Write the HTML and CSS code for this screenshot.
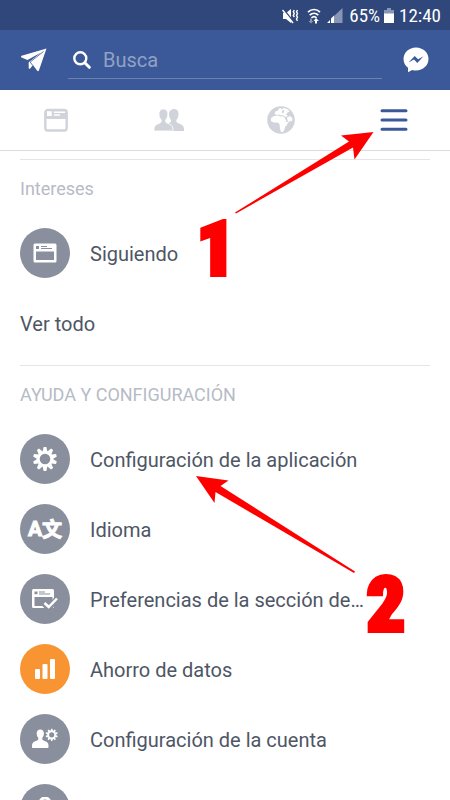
FILE: index.html
```html
<!DOCTYPE html>
<html lang="es">
<head>
<meta charset="utf-8">
<meta name="viewport" content="width=device-width, initial-scale=1">
<title>Menú</title>
<link rel="stylesheet" href="styles.css">
</head>
<body>
<div class="app">
  <div class="status">
    <svg class="status-mute" width="17" height="16" viewBox="0 0 17 16" aria-hidden="true">
      <path d="M1 5h3l5-4v14l-5-4H1z" fill="#fff"/>
      <path d="M1 .5l11 14" stroke="#2f477a" stroke-width="1.500"/>
      <path d="M.5 2l10.500 13" stroke="#fff" stroke-width="1.500"/>
      <path d="M12.300 2l-1 1.800 1 1.800-1 1.800 1 1.800M15.500 2l-1 1.800 1 1.800-1 1.800 1 1.800-1 1.800 1 1.800" fill="none" stroke="#fff" stroke-width="1.400"/>
    </svg>
    <svg class="status-wifi" width="14" height="16" viewBox="0 0 14 16" aria-hidden="true">
      <g fill="none" stroke="#fff" stroke-width="1.700"><path d="M1 4.200C4.500.6 9.500.6 13 4.200"/><path d="M2.700 7.200c2.600-2.600 6-2.600 8.600 0"/><path d="M4.500 9.800c1.500-1.500 3.500-1.500 5 0"/></g>
      <path d="M9 10l3 3h-2v2.500H8V13H6.500z" fill="#fff"/>
      <path d="M3 10.500h2V13h1.500L4 15.500 1.500 13H3z" fill="#8796b6"/>
    </svg>
    <svg class="status-signal" width="16" height="15" viewBox="0 0 16 15" aria-hidden="true">
      <path d="M15.500 0v15H7V8z" fill="#8796b6"/><path d="M7 7.500V15H4v-4.500zM3 12v3H0z" fill="#fff"/>
    </svg>
    <span class="status-pct">65%</span>
    <svg class="status-battery" width="10" height="15" viewBox="0 0 10 15" aria-hidden="true">
      <path d="M3 0h4v2h3v4H0V2h3z" fill="#8796b6"/><path d="M0 5.500h10V15H0z" fill="#fff"/>
    </svg>
    <time>12:40</time>
  </div>

  <header class="header">
    <button class="icon-btn" type="button" aria-label="Enviar">
      <svg width="26" height="24" viewBox="0 0 26 24"><path d="M25.500.5L.6 7.800c-.8.3-.7 1.200-.1 1.700L6.500 12 20 4.500 7.700 14.200v5.600c0 1.300 1 1.300 1.500.6l2.700-3.400 4.300 5.700c.7.700 1.400.5 1.700-.3z" fill="#fff"/><path d="M22.500 3.500L9.200 14l2.500 3.400" fill="none" stroke="#3b5998" stroke-width=".8"/></svg>
    </button>
    <label class="search">
      <svg width="18" height="18" viewBox="0 0 18 18" aria-hidden="true"><circle cx="7.300" cy="7.300" r="6" fill="none" stroke="#fff" stroke-width="2.400"/><path d="M11.800 11.800l4.500 4.500" stroke="#fff" stroke-width="3" stroke-linecap="round"/></svg>
      <input type="search" placeholder="Busca" aria-label="Busca">
    </label>
    <button class="icon-btn" type="button" aria-label="Messenger">
      <svg width="26" height="26" viewBox="0 0 26 26"><path d="M13 .5C6 .5.500 5.500.500 12c0 3.600 1.700 6.600 4.500 8.700v4.500l4.200-2.300c1.200.4 2.500.5 3.800.5 7 0 12.500-5 12.500-11.400S20 .5 13 .5z" fill="#fff"/><path d="M5.500 15.600L11.700 9l3.400 3.300L20.500 9.300l-6.200 6.600-3.300-3.400z" fill="#3b5998"/></svg>
    </button>
  </header>

  <nav class="tabs">
    <button type="button" aria-label="Noticias">
      <svg width="24" height="24" viewBox="0 0 24 24"><rect x="1.300" y="2" width="21.400" height="20.500" rx="2.500" fill="none" stroke="#d1d3da" stroke-width="2.400"/><path d="M1 2h22v9H1z" fill="#d1d3da"/><path d="M3 3.200h4.800V8H3zM9.800 3.500H21V5H9.800zM9.800 6.300H16v1.400H9.800z" fill="#fff"/></svg>
    </button>
    <button type="button" aria-label="Amigos">
      <svg width="30" height="24" viewBox="0 0 30 24"><g fill="#d1d3da"><path d="M20.200 1c3 0 4.600 2.300 4.300 5.700-.2 2.500-1.200 4.300-2.200 5.300 0 2 .3 2.500 2.200 3.300 3.300 1.300 5.500 2.500 5.500 6.200V23H18c1-3-.5-6-3.500-7.600 2-.7 2.600-1.400 2.500-3.400-1-1-1.800-3-2-5.300C14.800 3.300 17 1 20.200 1z"/><path d="M9.300 1c3 0 4.800 2.300 4.500 5.700-.2 2.600-1.200 4.300-2.300 5.300 0 2.200.4 2.600 2.200 3.300 3.300 1.200 5.300 2.500 5.300 6.200V23H0v-1.500C0 17.800 2 16.500 5.200 15.300 7 14.600 7.300 14.200 7.300 12 6.200 11 5.200 9.200 5 6.700 4.700 3.300 6.300 1 9.300 1z" stroke="#fff" stroke-width=".8"/></g></svg>
    </button>
    <button type="button" aria-label="Notificaciones">
      <svg width="28" height="28" viewBox="0 0 28 28"><circle cx="14" cy="14" r="13.800" fill="#d1d3da"/><path d="M4 12l3-2 4.500-.5 1.500 1 3.500-.3 1.500 2 1.500 3.800h2l-2 3.500-1.500 1.500-.5 2.500-1.500 2.500h-2l-1-3.500-.5-4.500-2-1.500H6.500L4 15zM7.500 8l1-2.500 2.500-1 1-2 2-.5v1.500l3-1.500 4 1.500 1.500 2-2 1-1.500 2 2 1.500-2.500 1-2-1.500-1.500-.5-1 .5-2-1-2 .5zM20 11.500l3-1.500 2.500 2.500-.5 3-1.500-1-1.500 2-1.500-2z" fill="#fff"/><path d="M15 4.500l2.500-.5-1 3-1.500.3z" fill="#d1d3da"/></svg>
    </button>
    <button type="button" aria-label="Menú" aria-current="page">
      <svg width="28" height="24" viewBox="0 0 28 24"><path d="M2 2.700h24M2 12h24M2 21.300h24" stroke="#3b5998" stroke-width="3" stroke-linecap="round"/></svg>
    </button>
  </nav>

  <main class="content">
    <section class="section">
      <h2>Intereses</h2>
      <button class="row" type="button">
        <span class="disc"><svg width="24" height="22" viewBox="0 0 24 22"><rect x=".5" y="1.500" width="23" height="19" rx="1.500" fill="#fff"/><path d="M3 4h3v3H3zM8 4h6v1H8zM8 6h11v1H8zM3 9.500h18V18H3z" fill="#898f9c"/></svg></span>
        <span class="label">Siguiendo</span>
      </button>
      <a class="row" href="#todo"><span class="label">Ver todo</span></a>
    </section>
    <section class="section">
      <h2>AYUDA Y CONFIGURACIÓN</h2>
      <button class="row" type="button">
        <span class="disc"><svg width="24" height="24" viewBox="-12 -12 24 24"><circle r="6.800" fill="none" stroke="#fff" stroke-width="3"/><g id="teeth" fill="#fff"><path id="tooth" d="M-2.400-7.500L-1.300-12h2.600l1.100 4.500z"/><use href="#tooth" transform="rotate(36)"/><use href="#tooth" transform="rotate(72)"/><use href="#tooth" transform="rotate(108)"/><use href="#tooth" transform="rotate(144)"/><use href="#tooth" transform="rotate(180)"/><use href="#tooth" transform="rotate(216)"/><use href="#tooth" transform="rotate(252)"/><use href="#tooth" transform="rotate(288)"/><use href="#tooth" transform="rotate(324)"/></g></svg></span>
        <span class="label">Configuración de la aplicación</span>
      </button>
      <button class="row" type="button">
        <span class="disc lang" aria-hidden="true"><span class="lang-a">A</span><span class="lang-w">文</span></span>
        <span class="label">Idioma</span>
      </button>
      <button class="row" type="button">
        <span class="disc"><svg width="26" height="22" viewBox="0 0 26 22"><rect x="0" y="1" width="22" height="19" rx="1.500" fill="#fff"/><path d="M2.500 3.500h3v2.700h-3zM7 3.500h6v1H7zM7 5.500h11v1H7zM2.500 9h18v9h-18z" fill="#898f9c"/><path d="M12 15.500l4.500 4.500L26 10" fill="none" stroke="#898f9c" stroke-width="6"/><path d="M12.500 15l4.200 4L25 10.500" fill="none" stroke="#fff" stroke-width="2.500"/></svg></span>
        <span class="label">Preferencias de la sección de…</span>
      </button>
      <button class="row" type="button">
        <span class="disc orange"><svg width="22" height="22" viewBox="0 0 22 22" fill="#fff"><rect x="1" y="11" width="5" height="10" rx="1"/><rect x="8.500" y="6" width="5" height="15" rx="1"/><rect x="16" y="1" width="5" height="20" rx="1"/></svg></span>
        <span class="label">Ahorro de datos</span>
      </button>
      <button class="row" type="button">
        <span class="disc"><svg width="26" height="22" viewBox="0 0 26 22"><path d="M8.300 1.500c2.400 0 3.800 1.600 3.600 4.300-.1 1.900-.8 3.200-1.600 4-.1 1.800.2 2.400 1.700 3 3 1 4.500 2 4.500 5V19c0 .8-.3 1-1 1H1c-.8 0-1-.3-1-1v-1.200c0-3 1.600-4 4.500-5 1.600-.6 1.900-1.200 1.800-3-.8-.8-1.500-2.100-1.600-4-.2-2.700 1.200-4.300 3.600-4.300z" fill="#fff"/><g transform="translate(19.700 6.800) scale(.51)"><circle r="6.800" fill="none" stroke="#fff" stroke-width="3.500"/><use href="#teeth"/></g></svg></span>
        <span class="label">Configuración de la cuenta</span>
      </button>
      <button class="row" type="button" aria-label="Privacidad">
        <span class="disc"><svg width="22" height="24" viewBox="0 0 22 24"><path d="M6 11V6a5 5 0 0110 0v5" fill="none" stroke="#fff" stroke-width="3"/><rect x="3" y="10" width="16" height="12" rx="1" fill="#fff"/></svg></span>
      </button>
    </section>
  </main>

  <svg class="marks" width="450" height="800" viewBox="0 0 450 800">
    <path d="M235 212.500L349 141.500 341 135.500 373.500 132 354.500 159.500 353 147.500 236 213.500z"/>
    <path d="M355 571.500L220.500 486 228.500 480.500 196 476 214.500 503 215.500 492 354 573z"/>
    <text x="216" y="275">1</text>
    <text x="386" y="631">2</text>
  </svg>
</div>
</body>
</html>
```
FILE: styles.css
```css
* { box-sizing: border-box; }

body {
  margin: 0;
  background: #fff;
  color: #4e5665;
  font-family: Roboto, "Liberation Sans", sans-serif;
  font-size: 20px;
}

button, input { font: inherit; color: inherit; }

button {
  padding: 0;
  border: 0;
  background: none;
  cursor: pointer;
}

svg { display: block; flex: none; }

.app {
  position: relative;
  display: flex;
  flex-direction: column;
  height: 100vh;
  overflow: hidden;
}

.status {
  display: flex;
  flex: none;
  align-items: center;
  justify-content: flex-end;
  height: 30px;
  padding: 1px 9px 0;
  background: #2f477a;
  color: #fff;
  font-family: "Roboto Condensed", Roboto, "Liberation Sans", sans-serif;
  font-size: 19px;
}

.status-wifi { margin-left: 8px; }
.status-signal { margin-left: 6px; }
.status-pct { margin-left: 6px; }
.status-battery { margin: 0 5px 0 4px; }

.header {
  display: flex;
  flex: none;
  align-items: center;
  gap: 21px;
  height: 60px;
  padding: 0 21px;
  background: #3b5998;
}

.search {
  display: flex;
  flex: 1;
  align-items: center;
  gap: 12px;
  height: 38px;
  padding-left: 5px;
  border-bottom: 1px solid #6c83b2;
}

.search input {
  flex: 1;
  min-width: 0;
  padding: 0;
  border: 0;
  outline: 0;
  background: none;
  color: #fff;
}

.search input::placeholder { color: #91a1c5; opacity: 1; }

.tabs {
  display: grid;
  flex: none;
  grid-template-columns: repeat(4, 1fr);
  height: 61px;
  border-bottom: 1px solid #dcdcde;
}

.tabs button {
  display: flex;
  align-items: center;
  justify-content: center;
}

.content {
  flex: 1;
  min-height: 0;
  padding: 8px 20px 0;
  overflow: hidden;
}

.section {
  padding-bottom: 7px;
  border-top: 1px solid #e5e5e8;
}

.section h2 {
  margin: 0;
  color: #b6bbc6;
  font-size: 18px;
  font-weight: 400;
  line-height: 58px;
}

.row {
  display: flex;
  align-items: center;
  gap: 20px;
  width: 100%;
  height: 70px;
  color: inherit;
  text-align: left;
  text-decoration: none;
}

.label {
  padding-top: 2px;
  line-height: 24px;
  white-space: nowrap;
}

.disc {
  display: flex;
  flex: none;
  align-items: center;
  justify-content: center;
  width: 50px;
  height: 50px;
  border-radius: 50%;
  background: #898f9c;
  color: #fff;
}

.orange { background: #f99433; }

.lang {
  font-weight: 700;
  line-height: 24px;
}

.lang-a {
  font-size: 21px;
  -webkit-text-stroke: 1px #fff;
}

.lang-w {
  font-family: "Noto Sans CJK SC", sans-serif;
  font-size: 20px;
  -webkit-text-stroke: 1px #fff;
}

.marks {
  position: absolute;
  top: 0;
  left: 0;
  fill: #f00;
  pointer-events: none;
}

.marks text {
  font-family: Impact, "Roboto Condensed", Roboto, sans-serif;
  font-size: 76px;
  font-weight: 900;
  stroke: #f00;
  stroke-width: 4px;
  text-anchor: middle;
}
```
